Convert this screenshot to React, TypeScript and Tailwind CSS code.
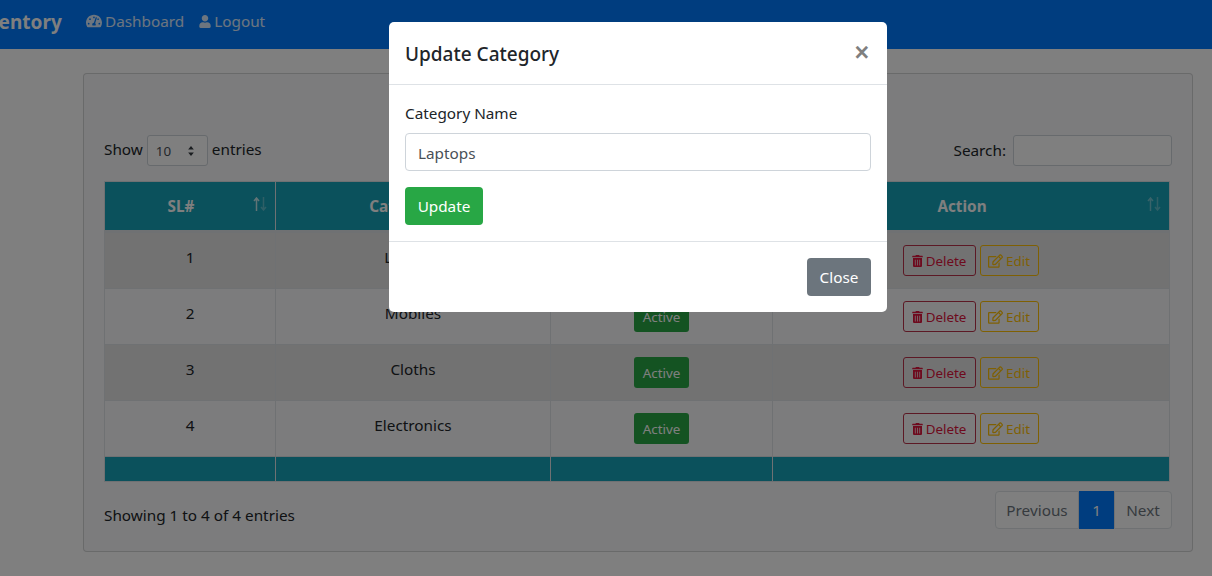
import { FaTachometerAlt, FaUser, FaTrashAlt, FaRegEdit } from "react-icons/fa";

const rows = [
  { id: 1, name: "Laptops" },
  { id: 2, name: "Mobiles" },
  { id: 3, name: "Cloths" },
  { id: 4, name: "Electronics" },
];

function SortHeader({ label, width, sorted }: { label: string; width: string; sorted?: boolean }) {
  return (
    <th
      className={`relative h-[50px] border border-[#dee2e6] bg-[#17a2b8] pl-3 pr-[30px] text-center align-middle font-bold text-white ${width}`}
    >
      {label}
      <svg
        viewBox="0 0 14 14"
        className="absolute right-[8px] top-[15px] h-[14px] w-[14px]"
        fill="none"
        stroke="currentColor"
        strokeWidth="1.5"
      >
        <path d="M3.5 14V1.5M1 4l2.5-3L6 4" opacity={sorted ? 0.75 : 0.4} />
        <path d="M10.5 0v12.5M8 10l2.5 3 2.5-3" opacity="0.3" />
      </svg>
    </th>
  );
}

function Navbar() {
  return (
    <nav className="flex h-[49px] items-start overflow-hidden bg-[#007bff] pt-[9px] text-white/85">
      <span className="-ml-[32px] mr-[30px] w-[88px] shrink-0 text-[19px] leading-[26px] font-bold text-white">
        Inventory
      </span>
      <a className="flex items-center gap-[3px] pr-[15px] leading-[24px]">
        <FaTachometerAlt className="h-[16px] w-[16px]" />
        Dashboard
      </a>
      <a className="flex items-center gap-[3px] leading-[24px]">
        <FaUser className="h-[13px] w-[12px]" />
        Logout
      </a>
    </nav>
  );
}

function CategoryTable() {
  return (
    <table className="w-[1065px] table-fixed border-collapse">
      <thead>
        <tr>
          <SortHeader label="SL#" width="w-[171px]" sorted />
          <SortHeader label="Category" width="w-[275px]" />
          <SortHeader label="Status" width="w-[222px]" />
          <SortHeader label="Action" width="w-[397px]" />
        </tr>
      </thead>
      <tbody className="border-t-[3px] border-[#dee2e6]">
        {rows.map((r) => (
          <tr key={r.id} className={r.id % 2 === 1 ? "bg-[#e5e5e5]" : ""}>
            <td className="h-[56px] border border-[#dee2e6] px-3 pt-[13px] text-center align-top">{r.id}</td>
            <td className="border border-[#dee2e6] px-3 pt-[13px] text-center align-top">{r.name}</td>
            <td className="border border-[#dee2e6] p-3 text-center align-top">
              <span className="inline-block h-[31px] w-[55px] rounded-[3px] bg-[#28a745] text-[13.4px] leading-[33px] text-white">
                Active
              </span>
            </td>
            <td className="border border-[#dee2e6] p-3 text-center align-top">
              <div className="flex justify-center gap-[4px] pr-[1px]">
                <button className="flex h-[31px] w-[73px] items-center justify-center gap-[3px] rounded-[3px] border border-[#b8324a] pt-[1px] text-[13.4px] text-[#dc143c]">
                  <FaTrashAlt className="h-[12px] w-[11px]" />
                  Delete
                </button>
                <button className="flex h-[31px] w-[59px] items-center justify-center gap-[3px] rounded-[3px] border border-[#ffc107] pt-[1px] text-[13.4px] text-[#ffc107]">
                  <FaRegEdit className="h-[14px] w-[15px]" />
                  Edit
                </button>
              </div>
            </td>
          </tr>
        ))}
      </tbody>
      <tfoot>
        <tr>
          <td className="h-[25px] border border-[#dee2e6] bg-[#17a2b8]"></td>
          <td className="border border-[#dee2e6] bg-[#17a2b8]"></td>
          <td className="border border-[#dee2e6] bg-[#17a2b8]"></td>
          <td className="border border-[#dee2e6] bg-[#17a2b8]"></td>
        </tr>
      </tfoot>
    </table>
  );
}

function Card() {
  return (
    <div className="ml-[83px] mt-[24px] h-[479px] w-[1110px] rounded-[4px] border border-black/15 bg-[#f8f9fa] px-[20px] pt-[61px]">
      <div className="mb-[15px] flex h-[31px] items-center justify-between">
        <div className="flex items-center gap-[4px] leading-[24px]">
          <span className="-mt-[4px]">Show</span>
          <div className="relative flex h-[31px] w-[61px] items-center rounded-[3px] border border-[#ced4da] bg-white pl-2 text-[13.4px] text-[#495057]">
            10
            <svg viewBox="0 0 8 14" className="absolute right-[12px] top-[10px] h-[10px] w-[8px]" fill="#343a40">
              <path d="M4 0 8 5H0zM4 14 0 9h8z" />
            </svg>
          </div>
          <span className="-mt-[4px]">entries</span>
        </div>
        <div className="flex items-center gap-[7px]">
          <span className="-mt-[1px]">Search:</span>
          <div className="h-[31px] w-[159px] rounded-[3px] border border-[#ced4da] bg-white"></div>
        </div>
      </div>
      <CategoryTable />
      <div className="mt-[9px] flex items-start justify-between">
        <span className="pt-[12px] leading-[24px]">Showing 1 to 4 of 4 entries</span>
        <div className="flex h-[38px] text-center leading-[36px]">
          <span className="w-[84px] rounded-l-[4px] border border-[#dee2e6] bg-white text-[#6c757d]">Previous</span>
          <span className="w-[35px] border border-[#007bff] bg-[#007bff] text-white">1</span>
          <span className="w-[58px] rounded-r-[4px] border border-[#dee2e6] bg-white text-[#6c757d]">Next</span>
        </div>
      </div>
    </div>
  );
}

function UpdateModal() {
  return (
    <div className="fixed inset-0 bg-black/50">
      <div className="ml-[389px] mt-[22px] w-[498px] rounded-[5px] bg-white">
        <div className="flex h-[63px] items-start justify-between border-b border-[#dee2e6] px-4 pt-[17px]">
          <h5 className="text-[19px] leading-[30px] font-medium text-[#212529]">Update Category</h5>
          <span className="-mt-[2px] mr-[2px] font-['Liberation_Sans'] text-[25px] leading-[30px] font-bold text-black/50">×</span>
        </div>
        <div className="border-b border-[#dee2e6] p-4">
          <label className="mb-2 block leading-[24px]">Category Name</label>
          <div className="mb-4 h-[38px] w-full rounded-[4px] border border-[#ced4da] px-3 leading-[38px] text-[#495057]">
            Laptops
          </div>
          <button className="h-[38px] w-[78px] rounded-[4px] bg-[#28a745] text-white">Update</button>
        </div>
        <div className="flex justify-end p-4">
          <button className="h-[38px] w-[64px] rounded-[4px] bg-[#6c757d] text-white">Close</button>
        </div>
      </div>
    </div>
  );
}

export default function App() {
  return (
    <div className="h-[576px] overflow-hidden bg-white font-['Noto_Sans','Open_Sans',sans-serif] text-[15.3px] text-[#212529]">
      <Navbar />
      <Card />
      <UpdateModal />
    </div>
  );
}
